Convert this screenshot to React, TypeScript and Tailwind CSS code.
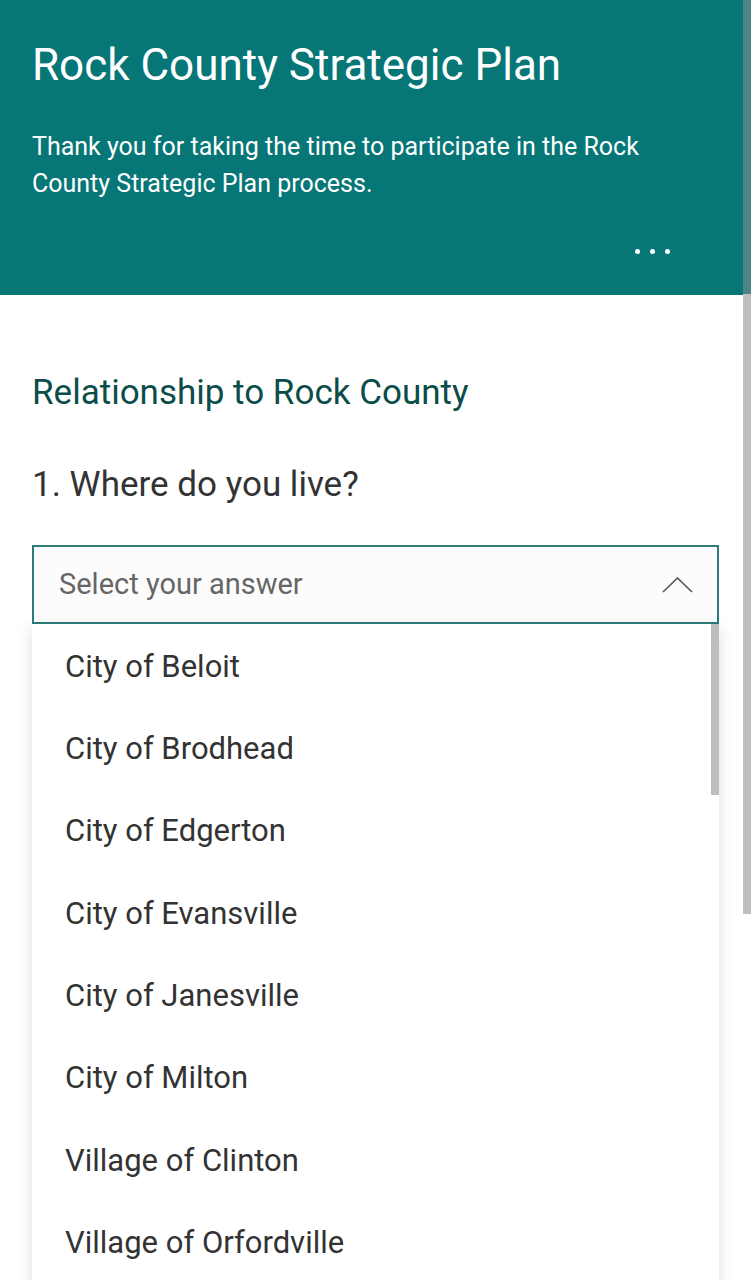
const options = [
  "City of Beloit",
  "City of Brodhead",
  "City of Edgerton",
  "City of Evansville",
  "City of Janesville",
  "City of Milton",
  "Village of Clinton",
  "Village of Orfordville",
];

export default function App() {
  return (
    <div className="relative h-[1280px] w-[751px] overflow-hidden bg-white font-['Roboto',sans-serif]">
      {/* page scrollbar */}
      <div className="absolute right-0 top-0 z-20 h-[294px] w-[8px] bg-[#4d8584]" />
      <div className="absolute right-0 top-[294px] z-20 h-[620px] w-[8px] bg-[#bfbfbf]" />

      <header className="flex h-[295px] flex-col bg-[#077676] px-8 pt-[37px] text-white">
        <h1 className="text-[44px] leading-[56px] font-normal">Rock County Strategic Plan</h1>
        <p className="mt-[35px] max-w-[640px] text-[25px] leading-[37px] font-normal">
          Thank you for taking the time to participate in the Rock County Strategic Plan process.
        </p>
        <div className="mt-auto mb-[41px] mr-[49px] flex justify-end gap-[10px]">
          <span className="h-[5px] w-[5px] rounded-full bg-white" />
          <span className="h-[5px] w-[5px] rounded-full bg-white" />
          <span className="h-[5px] w-[5px] rounded-full bg-white" />
        </div>
      </header>

      <main className="px-8 pt-[72px]">
        <h2 className="text-[35px] leading-[52px] text-[#0b4d49]">Relationship to Rock County</h2>
        <h3 className="mt-[40px] text-[35px] leading-[52px] text-[#333333]">1. Where do you live?</h3>

        <div className="relative mt-[34px] w-[687px]">
          <div className="flex h-[79px] items-center justify-between border-2 border-[#2d7c7b] bg-[#fcfcfc] pl-[25px] pr-[24px]">
            <span className="text-[29px] text-[#666666]">Select your answer</span>
            <svg width="31" height="16" viewBox="0 0 31 16" fill="none">
              <path d="M1 15 L15.5 1 L30 15" stroke="#555555" strokeWidth="1.6" />
            </svg>
          </div>
          <div className="absolute left-0 top-[79px] z-10 h-[700px] w-[687px] bg-white shadow-[0_4px_14px_rgba(0,0,0,0.14)]">
            <div className="absolute right-0 top-0 h-[171px] w-[8px] bg-[#bdbdbd]" />
            <ul className="pt-[2px]">
              {options.map((o) => (
                <li key={o} className="flex h-[82.3px] items-center pl-[33px] text-[31px] text-[#333333]">
                  {o}
                </li>
              ))}
            </ul>
          </div>
        </div>
      </main>
    </div>
  );
}
